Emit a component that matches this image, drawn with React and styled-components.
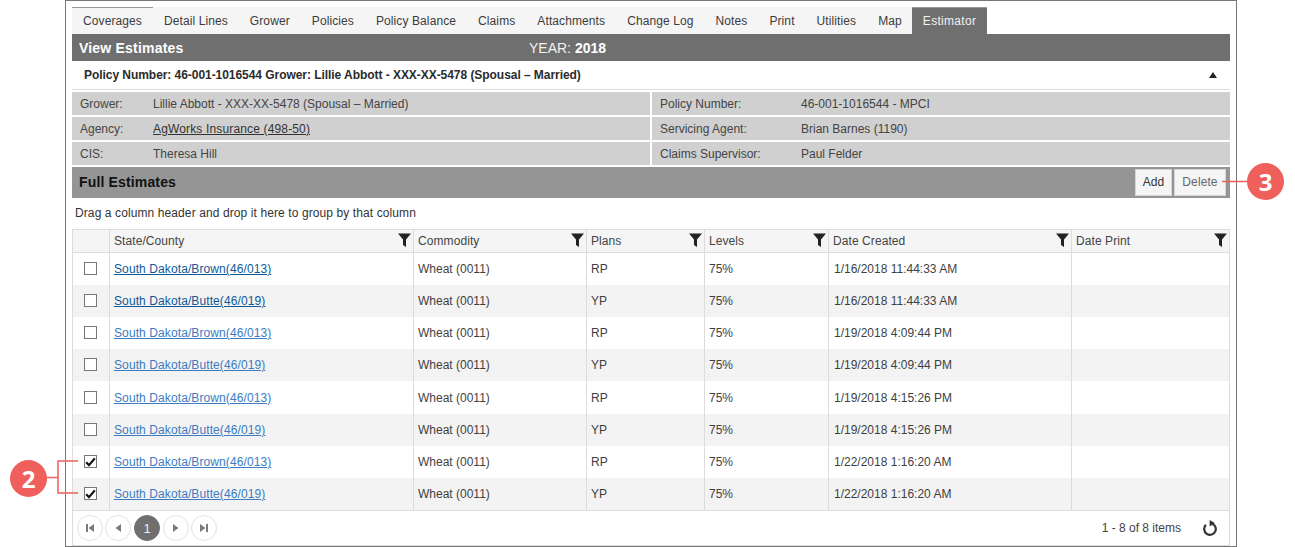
import React from 'react'
import styled, { createGlobalStyle } from 'styled-components'

const GlobalStyle = createGlobalStyle`
  html, body { margin: 0; padding: 0; background: #fff; }
  body { font-family: "Liberation Sans", Arial, sans-serif; font-size: 12px; color: #3a3a3a; }
`

const Page = styled.div`
  position: relative;
  width: 1295px;
  height: 547px;
  overflow: hidden;
`

const Frame = styled.div`
  box-sizing: border-box;
  margin-left: 65px;
  width: 1172px;
  height: 547px;
  border: 1px solid #777;
  padding: 6px 6px 0 6px;
`

const Tabs = styled.div`
  display: flex;
  width: fit-content;
  height: 27px;
  background: #f5f5f5;
`

const Tab = styled.div`
  box-sizing: border-box;
  height: 27px;
  margin-left: ${p => (p.$active ? '-1px' : '0')};
  padding: 6px 11px 0;
  line-height: 15px;
  letter-spacing: ${p => (p.$active ? '0.3px' : '0.1px')};
  white-space: nowrap;
  color: ${p => (p.$active ? '#f2f2f2' : '#3c3c3c')};
  background: ${p => (p.$active ? '#6f6f6f' : 'transparent')};
  border-top: 1px solid ${p => (p.$active || p.$first ? '#999' : 'transparent')};
`

const ViewBar = styled.div`
  display: flex;
  align-items: center;
  height: 27px;
  padding-left: 7px;
  background: #6f6f6f;
  color: #fff;
`

const ViewTitle = styled.div`
  width: 450px;
  font-size: 14px;
  font-weight: bold;
  letter-spacing: 0.2px;
`

const Year = styled.div`
  font-size: 14px;
  color: #f2f2f2;
  b { color: #fff; }
`

const PolicyRow = styled.div`
  box-sizing: border-box;
  display: flex;
  align-items: center;
  justify-content: space-between;
  height: 29px;
  padding: 0 13px 0 12px;
  border-bottom: 1px solid #dcdcdc;
  font-weight: bold;
  letter-spacing: -0.05px;
  color: #2b2b2b;
`

const Arrow = styled.span`
  width: 0;
  height: 0;
  border-left: 4px solid transparent;
  border-right: 4px solid transparent;
  border-bottom: 6px solid #222;
`

const Info = styled.div`
  display: grid;
  grid-template-columns: 578px 578px;
  gap: 2px;
  margin-top: 2px;
`

const InfoCell = styled.div`
  display: flex;
  align-items: center;
  height: 23px;
  padding-left: 8px;
  background: #d0d0d0;
  color: #444;
`

const InfoLabel = styled.span`
  width: ${p => (p.$right ? '141px' : '73px')};
  flex: none;
`

const AgencyLink = styled.a`
  color: #333;
  letter-spacing: 0.15px;
  text-decoration: underline;
`

const SectionBar = styled.div`
  display: flex;
  align-items: center;
  justify-content: space-between;
  height: 31px;
  margin-top: 2px;
  padding: 0 4px 1px 7px;
  box-sizing: border-box;
  background: #959595;
  font-size: 14px;
  font-weight: bold;
  letter-spacing: 0.15px;
  color: #111;
`

const Actions = styled.div`
  display: flex;
  gap: 2px;
`

const ActionButton = styled.button`
  box-sizing: border-box;
  height: 27px;
  padding: 0;
  width: ${p => p.$w}px;
  background: #f5f5f5;
  border: 1px solid #d6d6d6;
  font: 12px "Liberation Sans", Arial, sans-serif;
  letter-spacing: 0.1px;
  color: ${p => (p.$muted ? '#666' : '#333')};
`

const Grid = styled.div`
  border-right: 1px solid #dcdcdc;
  border-left: 1px solid #dcdcdc;
  border-bottom: 1px solid #dcdcdc;
`

const GroupHint = styled.div`
  box-sizing: border-box;
  height: 31px;
  padding: 8px 0 0 3px;
  line-height: 15px;
  letter-spacing: 0.1px;
  color: #333;
`

const Row = styled.div`
  display: grid;
  grid-template-columns: 36px 304px 173px 118px 124px 243px 1fr;
  height: ${p => p.$h || 32}px;
  background: ${p => (p.$alt ? '#f3f3f3' : '#fff')};
`

const HeaderRow = styled(Row)`
  box-sizing: border-box;
  height: 24px;
  background: #f5f5f5;
  border-top: 1px solid #dcdcdc;
  border-bottom: 1px solid #dcdcdc;
`

const HeadCell = styled.div`
  position: relative;
  padding: 4px 0 0 4px;
  line-height: 15px;
  letter-spacing: 0.08px;
  color: #444;
  border-left: ${p => (p.$first ? 'none' : '1px solid #dcdcdc')};
`

const FilterIcon = styled.svg`
  position: absolute;
  right: 2px;
  top: 3px;
  width: 13px;
  height: 14px;
`

const Cell = styled.div`
  display: flex;
  align-items: center;
  padding-left: ${p => p.$pad ?? 4}px;
  border-left: 1px solid #dcdcdc;
  color: #3f3f3f;
`

const CheckCell = styled.div`
  display: flex;
  align-items: center;
  justify-content: center;
  padding: 0 1px 1px 0;
`

const Box = styled.span`
  box-sizing: border-box;
  display: flex;
  align-items: center;
  justify-content: center;
  width: 13px;
  height: 13px;
  background: #fff;
  border: 1px solid #777;
`

const RowLink = styled.a`
  text-decoration: underline;
  letter-spacing: 0.1px;
  color: ${p => (p.$dark ? '#0f5a96' : '#3a7cbf')};
`

const Pager = styled.div`
  display: flex;
  align-items: center;
  justify-content: space-between;
  height: 34px;
  padding: 0 11px 0 4px;
  border-top: 1px solid #dcdcdc;
`

const PagerButtons = styled.div`
  display: flex;
  gap: 2px;
`

const PageButton = styled.span`
  box-sizing: border-box;
  display: flex;
  align-items: center;
  justify-content: center;
  width: 26px;
  height: 26px;
  margin: ${p => (p.$active ? '0 1px' : '0')};
  border-radius: 50%;
  border: 1px solid ${p => (p.$active ? '#6f6f6f' : '#e2e2e2')};
  background: ${p => (p.$active ? '#6f6f6f' : '#fff')};
  color: #eee;
  font-size: 13px;
`

const PagerRight = styled.div`
  display: flex;
  align-items: center;
  gap: 21px;
  color: #444;
`

/* numbered callouts sit over the page, outside the frame */
const Badge = styled.div`
  position: absolute;
  left: ${p => p.$x}px;
  top: ${p => p.$y}px;
  width: 37px;
  height: 37px;
  border-radius: 50%;
  background: #ef5f5b;
  color: #fff;
  font: bold 24px/37px "Open Sans", "Liberation Sans", sans-serif;
  text-align: center;
`

const Callout = styled.svg`
  position: absolute;
  left: 0;
  top: 0;
  width: 1295px;
  height: 547px;
  pointer-events: none;
`

const tabs = ['Coverages', 'Detail Lines', 'Grower', 'Policies', 'Policy Balance', 'Claims', 'Attachments', 'Change Log', 'Notes', 'Print', 'Utilities', 'Map', 'Estimator']
const columns = ['State/County', 'Commodity', 'Plans', 'Levels', 'Date Created', 'Date Print']
const brown = 'South Dakota/Brown(46/013)'
const butte = 'South Dakota/Butte(46/019)'
const rows = [
  { county: brown, plan: 'RP', date: '1/16/2018 11:44:33 AM' },
  { county: butte, plan: 'YP', date: '1/16/2018 11:44:33 AM' },
  { county: brown, plan: 'RP', date: '1/19/2018 4:09:44 PM' },
  { county: butte, plan: 'YP', date: '1/19/2018 4:09:44 PM' },
  { county: brown, plan: 'RP', date: '1/19/2018 4:15:26 PM', h: 33 },
  { county: butte, plan: 'YP', date: '1/19/2018 4:15:26 PM' },
  { county: brown, plan: 'RP', date: '1/22/2018 1:16:20 AM', checked: true },
  { county: butte, plan: 'YP', date: '1/22/2018 1:16:20 AM', checked: true },
]

const Funnel = () => (
  <FilterIcon viewBox="0 0 13 14">
    <path d="M0 0.5h13L8 6.5V14L5 12V6.500z" fill="#222" />
  </FilterIcon>
)

const Tick = () => (
  <svg width="11" height="10" viewBox="0 0 11 10">
    <path d="M1.2 5.2L4 8.2L9.8 1.4" fill="none" stroke="#111" strokeWidth="2.2" />
  </svg>
)

const PagerIcon = ({ d }) => (
  <svg width="10" height="10" viewBox="0 0 10 10">
    <path d={d} fill="#7b7b7b" />
  </svg>
)

const App = () => {
  return (
    <Page>
      <GlobalStyle />
      <Frame>
        <Tabs>
          {tabs.map((t, i) => (
            <Tab key={t} $first={i === 0} $active={t === 'Estimator'}>{t}</Tab>
          ))}
        </Tabs>
        <ViewBar>
          <ViewTitle>View Estimates</ViewTitle>
          <Year>YEAR: <b>2018</b></Year>
        </ViewBar>
        <PolicyRow>
          <span>Policy Number: 46-001-1016544 Grower: Lillie Abbott - XXX-XX-5478 (Spousal – Married)</span>
          <Arrow />
        </PolicyRow>
        <Info>
          <InfoCell><InfoLabel>Grower:</InfoLabel>Lillie Abbott - XXX-XX-5478 (Spousal – Married)</InfoCell>
          <InfoCell><InfoLabel $right>Policy Number:</InfoLabel>46-001-1016544 - MPCI</InfoCell>
          <InfoCell><InfoLabel>Agency:</InfoLabel><AgencyLink>AgWorks Insurance (498-50)</AgencyLink></InfoCell>
          <InfoCell><InfoLabel $right>Servicing Agent:</InfoLabel>Brian Barnes (1190)</InfoCell>
          <InfoCell><InfoLabel>CIS:</InfoLabel>Theresa Hill</InfoCell>
          <InfoCell><InfoLabel $right>Claims Supervisor:</InfoLabel>Paul Felder</InfoCell>
        </Info>
        <SectionBar>
          Full Estimates
          <Actions>
            <ActionButton $w={37}>Add</ActionButton>
            <ActionButton $w={52} $muted>Delete</ActionButton>
          </Actions>
        </SectionBar>
        <GroupHint>Drag a column header and drop it here to group by that column</GroupHint>
        <Grid>
          <HeaderRow>
            <HeadCell $first />
            {columns.map(c => (
              <HeadCell key={c}>{c}<Funnel /></HeadCell>
            ))}
          </HeaderRow>
          {rows.map((r, i) => (
            <Row key={i} $alt={i % 2 === 1} $h={r.h}>
              <CheckCell><Box>{r.checked && <Tick />}</Box></CheckCell>
              <Cell><RowLink $dark={i < 2}>{r.county}</RowLink></Cell>
              <Cell>Wheat (0011)</Cell>
              <Cell>{r.plan}</Cell>
              <Cell>75%</Cell>
              <Cell $pad={5}>{r.date}</Cell>
              <Cell />
            </Row>
          ))}
          <Pager>
            <PagerButtons>
              <PageButton><PagerIcon d="M1 1h2v8H1zM9 1v8L3.5 5z" /></PageButton>
              <PageButton><PagerIcon d="M8 1v8L2.5 5z" /></PageButton>
              <PageButton $active>1</PageButton>
              <PageButton><PagerIcon d="M2 1v8l5.5-4z" /></PageButton>
              <PageButton><PagerIcon d="M9 1H7v8h2zM1 1v8l5.5-4z" /></PageButton>
            </PagerButtons>
            <PagerRight>
              1 - 8 of 8 items
              <svg width="16" height="16" viewBox="0 0 16 16">
                <path d="M9 3.300A5.800 5.800 0 1 1 3.900 4.900" fill="none" stroke="#333" strokeWidth="2.200" />
                <path d="M7.600 0L12.800 3L7.600 6.400z" fill="#333" />
              </svg>
            </PagerRight>
          </Pager>
        </Grid>
      </Frame>
      <Callout viewBox="0 0 1295 547">
        <path d="M78 461H58V493H78M47 477.500H58" fill="none" stroke="#ef5f5b" strokeWidth="1.5" />
        <path d="M1222 181.500H1255" fill="none" stroke="#ef5f5b" strokeWidth="1.5" />
      </Callout>
      <Badge $x={10} $y={460}>2</Badge>
      <Badge $x={1247} $y={163}>3</Badge>
    </Page>
  )
}

export default App
